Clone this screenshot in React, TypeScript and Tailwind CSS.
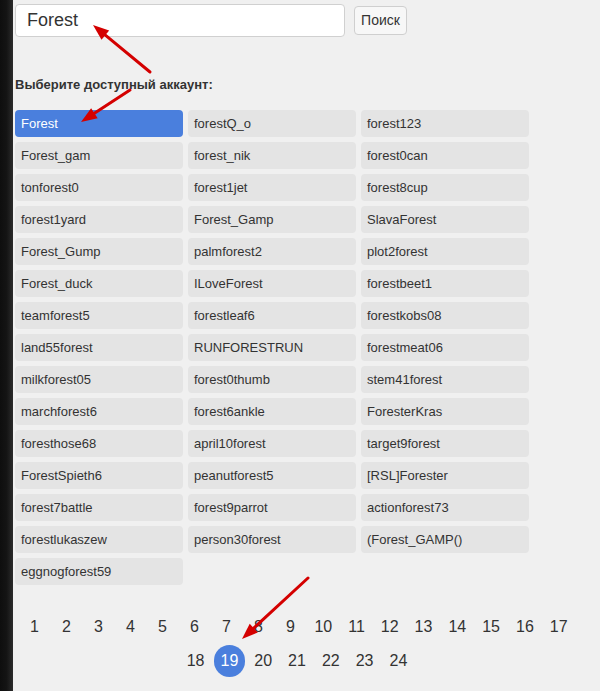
import React from 'react';

const accounts = [
    'Forest', 'forestQ_o', 'forest123',
    'Forest_gam', 'forest_nik', 'forest0can',
    'tonforest0', 'forest1jet', 'forest8cup',
    'forest1yard', 'Forest_Gamp', 'SlavaForest',
    'Forest_Gump', 'palmforest2', 'plot2forest',
    'Forest_duck', 'ILoveForest', 'forestbeet1',
    'teamforest5', 'forestleaf6', 'forestkobs08',
    'land55forest', 'RUNFORESTRUN', 'forestmeat06',
    'milkforest05', 'forest0thumb', 'stem41forest',
    'marchforest6', 'forest6ankle', 'ForesterKras',
    'foresthose68', 'april10forest', 'target9forest',
    'ForestSpieth6', 'peanutforest5', '[RSL]Forester',
    'forest7battle', 'forest9parrot', 'actionforest73',
    'forestlukaszew', 'person30forest', '(Forest_GAMP()',
    'eggnogforest59',
];

const pages = Array.from({ length: 24 }, (_, i) => i + 1);
const current = 19;

// красная стрелка-аннотация
const Arrow = ({ x1, y1, x2, y2 }: { x1: number; y1: number; x2: number; y2: number }) => {
    const a = Math.atan2(y2 - y1, x2 - x1);
    const len = 16;
    const w = 6;
    const bx = x2 - len * Math.cos(a);
    const by = y2 - len * Math.sin(a);
    const p1 = `${bx + w * Math.sin(a)},${by - w * Math.cos(a)}`;
    const p2 = `${bx - w * Math.sin(a)},${by + w * Math.cos(a)}`;
    return (
        <g>
            <line x1={x1} y1={y1} x2={bx} y2={by} stroke="#d40000" strokeWidth={3} strokeLinecap="round" />
            <polygon points={`${x2},${y2} ${p1} ${p2}`} fill="#d40000" />
        </g>
    );
};

export default function App() {
    return (
        <div className="relative flex min-h-screen w-[600px] h-[691px] bg-[#f0f0f0] font-['Liberation_Sans',Arial,sans-serif] text-[#333] overflow-hidden">
            {/* Левая тёмная полоса */}
            <div className="w-[13px] shrink-0 bg-gradient-to-r from-[#0e0e0e] via-[#141414] to-[#2b2b2b]" />

            <div className="pl-[2px] pt-[4px]">
                {/* Поиск */}
                <div className="flex items-center gap-[9px]">
                    <div className="w-[330px] h-[33px] bg-white border border-[#d0d0d0] rounded-[4px] flex items-center pl-[11px] text-[18px] text-[#333]">
                        Forest
                    </div>
                    <button className="h-[29px] w-[53px] bg-[#f7f7f7] border border-[#cfcfcf] rounded-[4px] text-[14px] text-[#333]">
                        Поиск
                    </button>
                </div>

                <div className="mt-[40px] text-[13px] font-bold leading-[16px] text-[#333]">
                    Выберите доступный аккаунт:
                </div>

                {/* Аккаунты */}
                <div className="mt-[17px] grid grid-cols-[168px_168px_168px] gap-[5px]">
                    {accounts.map((name, i) => (
                        <div
                            key={name}
                            className={`h-[27px] rounded-[4px] pl-[6px] flex items-center text-[13px] ${i === 0 ? 'bg-[#4a7fdd] text-white' : 'bg-[#e4e4e4] text-[#333]'
                                }`}
                        >
                            {name}
                        </div>
                    ))}
                </div>

                {/* Страницы */}
                <div className="mt-[26px] w-[564px] flex flex-wrap justify-center gap-x-[2px] gap-y-[2px]">
                    {pages.map((p) => (
                        <div
                            key={p}
                            className={`h-[32px] min-w-[30px] px-[7px] flex items-center justify-center text-[16px] ${p === current ? 'bg-[#4a7fdd] text-white rounded-full' : 'text-[#333]'
                                }`}
                        >
                            {p}
                        </div>
                    ))}
                </div>
            </div>

            {/* Стрелки */}
            <svg className="absolute inset-0 pointer-events-none" width={600} height={691}>
                <Arrow x1={150} y1={72} x2={93} y2={25} />
                <Arrow x1={130} y1={90} x2={81} y2={122} />
                <Arrow x1={308} y1={578} x2={242} y2={639} />
            </svg>
        </div>
    );
}
